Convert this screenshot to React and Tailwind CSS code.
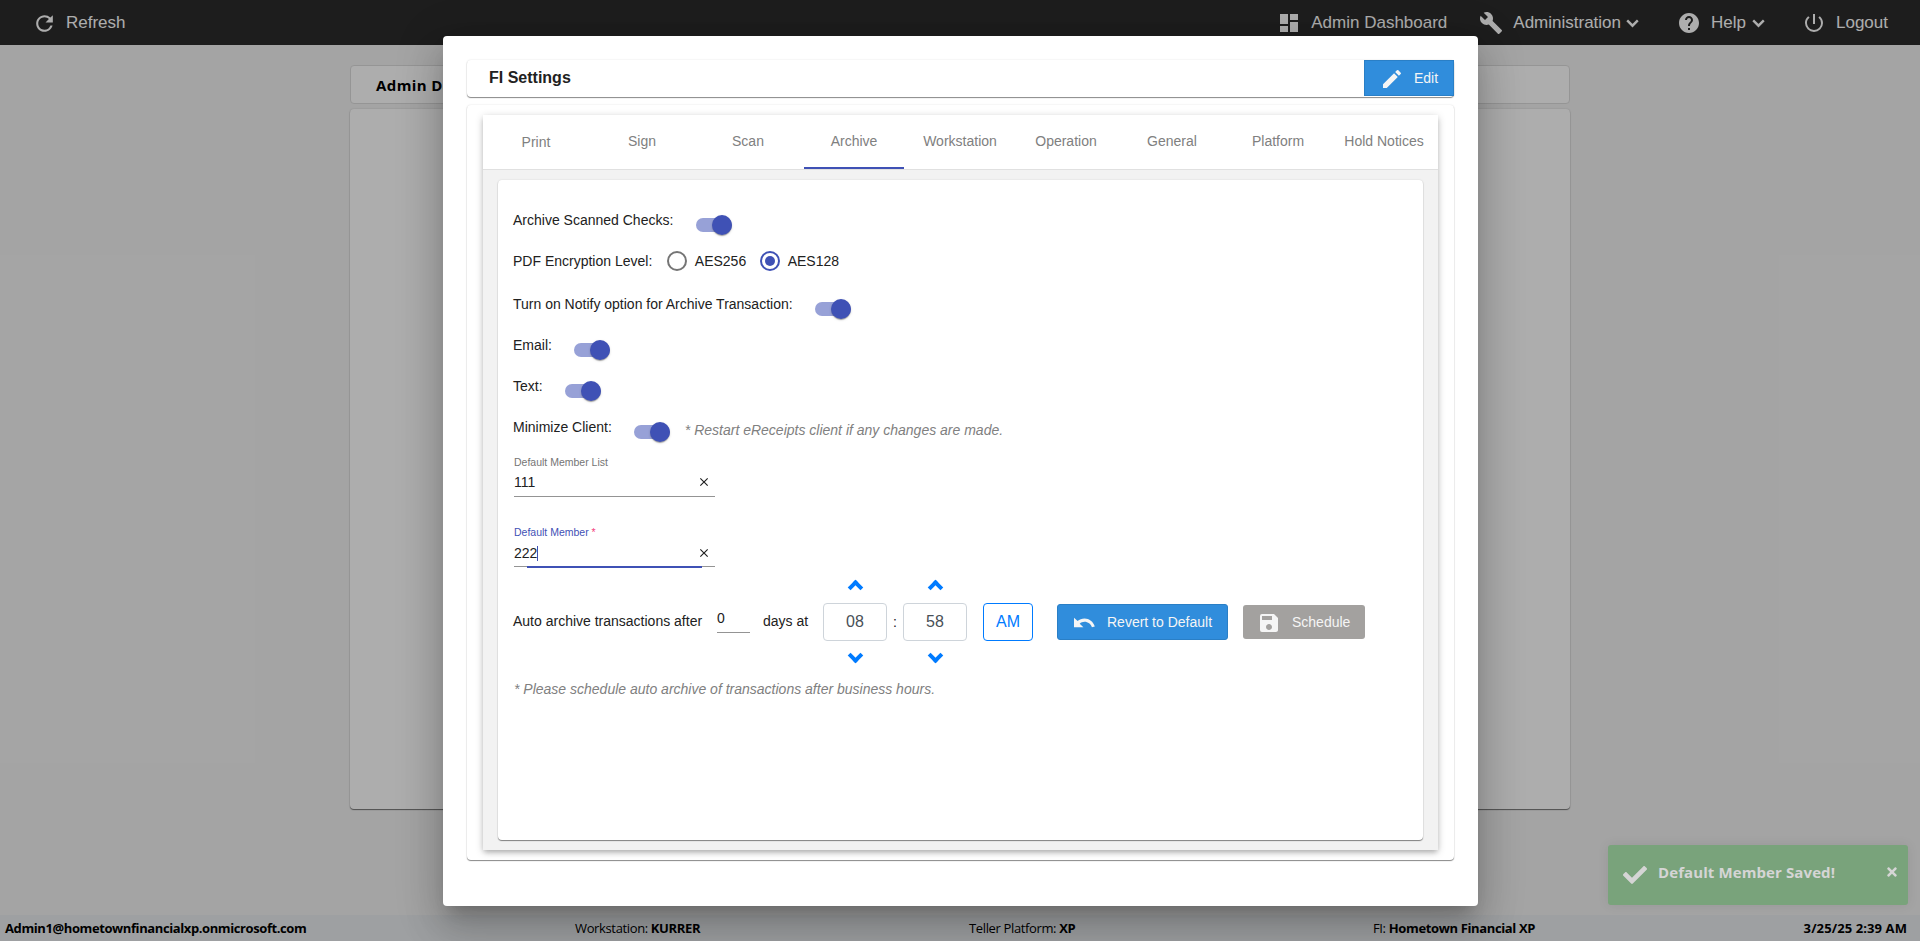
import React, { useState } from "react";
import { MdBuild, MdClose, MdDashboard, MdEdit, MdHelp, MdPowerSettingsNew, MdRefresh, MdSave } from "react-icons/md";
import { FaCheck, FaTimes } from "react-icons/fa";

const tabs = ["Print", "Sign", "Scan", "Archive", "Workstation", "Operation", "General", "Platform", "Hold Notices"];

const Chevron = () => (
  <svg className="mt-[2px] h-[9px] w-[13px]" viewBox="0 0 13 9" fill="none" stroke="currentColor" strokeWidth="2.4">
    <path d="M1.2 1.4 6.5 6.7 11.8 1.4" />
  </svg>
);

const UndoIcon = () => (
  <svg className="mt-px size-6" viewBox="0 0 24 24" fill="currentColor">
    <path d="M12.5 7.6c-2.65 0-5.05 1-6.9 2.5L2 6.8v9.4h9.4l-3.7-3.5c1.39-1.16 2.9-1.9 4.8-1.9 3.54 0 6.3 2.31 7.4 5.5l2.9-.9C21.3 10.9 17.15 7.6 12.5 7.6z" />
  </svg>
);

const TopBar = () => (
  <header className="flex h-[45px] shrink-0 items-center justify-between bg-[#2c2c2c] pl-8 pr-8 text-[17px] text-white">
    <button className="flex items-center">
      <MdRefresh className="mt-px size-[25px]" />
      <span className="ml-[9px]">Refresh</span>
    </button>
    <nav className="flex items-center">
      <a className="flex items-center">
        <MdDashboard className="mt-px size-6" />
        <span className="ml-[10px]">Admin Dashboard</span>
      </a>
      <a className="ml-8 flex items-center">
        <MdBuild className="mt-px size-6" />
        <span className="ml-[10px] mr-[5px]">Administration</span>
        <Chevron />
      </a>
      <a className="ml-[38px] flex items-center">
        <MdHelp className="mt-px size-6" />
        <span className="ml-[10px] mr-[6px]">Help</span>
        <Chevron />
      </a>
      <a className="ml-[37px] flex items-center">
        <MdPowerSettingsNew className="mt-px size-6" />
        <span className="ml-[10px]">Logout</span>
      </a>
    </nav>
  </header>
);

const StatusBar = () => (
  <footer className="flex h-[26px] shrink-0 items-center bg-[#e9ecef] pl-[5px] pt-px font-['Open_Sans',sans-serif] text-[13px] tracking-[-0.36px] text-black">
    <span className="w-[570px] font-bold tracking-[-0.4px]">Admin1@hometownfinancialxp.onmicrosoft.com</span>
    <span className="w-[394px]">Workstation: <b>KURRER</b></span>
    <span className="w-[404px]">Teller Platform: <b>XP</b></span>
    <span>FI: <b>Hometown Financial XP</b></span>
    <span className="ml-auto pr-[13px] font-bold tracking-[0.1px]">3/25/25 2:39 AM</span>
  </footer>
);

const Toggle = ({ checked = true, onChange }) => (
  <button role="switch" aria-checked={checked} onClick={onChange} className="ml-[22.5px] mt-[10px] flex h-5 w-9 items-center rounded-full">
    <span className="flex h-[14px] w-9 items-center justify-end rounded-full bg-[#3f51b5]/54">
      <span className="size-5 shrink-0 rounded-full bg-[#3f51b5] shadow-[0_2px_1px_-1px_rgba(0,0,0,.2),0_1px_1px_0_rgba(0,0,0,.14),0_1px_3px_0_rgba(0,0,0,.12)]" />
    </span>
  </button>
);

const SwitchRow = ({ label, className, children }) => {
  const [on, setOn] = useState(true);
  return (
    <div className={`flex h-5 items-center ${className || ""}`}>
      <span>{label}</span>
      <Toggle checked={on} onChange={() => setOn(!on)} />
      {children}
    </div>
  );
};

const Radio = ({ label, checked, className }) => (
  <label className={`flex items-center ${className}`}>
    <span className={`flex size-5 items-center justify-center rounded-full border-2 ${checked ? "border-[#3f51b5]" : "border-[#757575]"}`}>
      {checked && <span className="size-[10px] rounded-full bg-[#3f51b5]" />}
    </span>
    <span className="ml-[7.5px]">{label}</span>
  </label>
);

const Field = ({ label, value, required, focused, className }) => (
  <div className={`relative ml-px h-[41px] w-[201px] border-b border-[#949494] ${className}`}>
    <div className={`h-3 text-[10.5px] leading-[12px] ${focused ? "text-[#3f51b5]" : "text-[#757575]"}`}>
      {label}
      {required && <span className="text-[#f44380]"> *</span>}
    </div>
    <div className={`flex h-5 items-center ${focused ? "mt-[5px]" : "mt-1"}`}>
      <span className={focused ? "pb-px" : ""}>{value}</span>
      {focused && <span className="h-[15px] w-px bg-[#3f51b5]" />}
      <MdClose className="ml-auto mr-1 size-[14px]" />
    </div>
    {focused && <span className="absolute -bottom-[2px] left-[13px] h-[2px] w-[175px] bg-[#3f51b5]" />}
  </div>
);

const TimeUnit = ({ value }) => (
  <div className="flex h-[92px] w-16 flex-col items-center justify-between">
    <button className="flex h-[22px] items-center">
      <span className="size-[11px] -rotate-45 border-r-[4.5px] border-t-[4.5px] border-[#007bff]" />
    </button>
    <div className="flex h-[38px] w-16 items-center justify-center rounded border border-[#ced4da] text-base text-[#495057]">{value}</div>
    <button className="flex h-[22px] items-center pb-[3px]">
      <span className="size-[11px] rotate-[135deg] border-r-[4.5px] border-t-[4.5px] border-[#007bff]" />
    </button>
  </div>
);

const ArchiveForm = () => (
  <div className="mx-[15px] mt-[10px] h-[660px] rounded bg-white pl-[15px] pt-[30px] shadow-[0_1px_1px_0_rgba(0,0,0,.45),0_0_2px_0_rgba(0,0,0,.12)]">
    <SwitchRow label="Archive Scanned Checks:" />
    <div className="mt-[21px] flex h-5 items-center">
      <span>PDF Encryption Level:</span>
      <Radio label="AES256" className="ml-[15px]" />
      <Radio label="AES128" checked className="ml-[14px]" />
    </div>
    <SwitchRow label="Turn on Notify option for Archive Transaction:" className="mt-[23px]" />
    <SwitchRow label="Email:" className="mt-[21px]" />
    <SwitchRow label="Text:" className="mt-[21px]" />
    <SwitchRow label="Minimize Client:" className="mt-[21px]">
      <span className="ml-[14.5px] mt-[6px] italic text-[#808080]">* Restart eReceipts client if any changes are made.</span>
    </SwitchRow>
    <Field label="Default Member List" value="111" className="mt-[19px]" />
    <Field label="Default Member" value="222" required focused className="mt-[29px]" />
    <div className="mt-[9px] flex h-[92px] items-center">
      <span className="w-[204px] pb-[2px]">Auto archive transactions after</span>
      <span className="-mt-[5px] h-[27px] w-[33px] border-b border-[#949494] pt-[2px] leading-[20px]">0</span>
      <span className="ml-[13px] w-[60px] pb-[2px]">days at</span>
      <TimeUnit value="08" />
      <span className="w-4 text-center">:</span>
      <TimeUnit value="58" />
      <button className="ml-4 h-[38px] w-[50px] rounded border border-[#007bff] text-base text-[#007bff]">AM</button>
      <button className="ml-6 flex h-9 w-[171px] items-center rounded-[3px] border border-[#2a7fc6] bg-[#308ddc] pl-[14px] text-[#f5f5f5]">
        <UndoIcon />
        <span className="ml-[11px]">Revert to Default</span>
      </button>
      <button className="ml-[15px] flex h-[34px] w-[122px] items-center rounded-[3px] bg-[#a3a19f] pl-[14px] text-[#f5f5f5]">
        <MdSave className="mt-px size-6" />
        <span className="ml-[11px]">Schedule</span>
      </button>
    </div>
    <p className="ml-px mt-[11px] leading-[20px] italic text-[#808080]">* Please schedule auto archive of transactions after business hours.</p>
  </div>
);

const SettingsDialog = () => {
  const [active, setActive] = useState("Archive");
  return (
    <div className="absolute left-[443px] top-9 h-[870px] w-[1035px] rounded bg-white p-6 text-sm text-[#212121] shadow-[0_11px_15px_-7px_rgba(0,0,0,.2),0_24px_38px_3px_rgba(0,0,0,.14),0_9px_46px_8px_rgba(0,0,0,.12)]">
      <div className="flex h-[37px] items-start rounded pl-[22px] shadow-[0_1px_1px_0_rgba(0,0,0,.45),0_0_2px_0_rgba(0,0,0,.12)]">
        <h2 className="text-base font-bold leading-[35px]">FI Settings</h2>
        <button className="ml-auto flex h-9 w-[90px] items-center border border-[#2a7fc6] bg-[#308ddc] pl-[15px] text-[#f5f5f5]">
          <MdEdit className="mt-[2px] size-6" />
          <span className="ml-[10px]">Edit</span>
        </button>
      </div>
      <div className="mt-2 h-[755px] rounded px-4 pt-[10px] shadow-[0_1px_1px_0_rgba(0,0,0,.45),0_0_2px_0_rgba(0,0,0,.12)]">
        <div className="h-[735px] bg-[#f2f2f2] shadow-[0_3px_5px_-1px_rgba(0,0,0,.2),0_2px_8px_0_rgba(0,0,0,.2)]">
          <div className="grid h-[55px] grid-cols-9 border-b border-[#e0e0e0] bg-white pr-px">
            {tabs.map((tab) => (
              <button
                key={tab}
                onClick={() => setActive(tab)}
                className={`mx-[3px] flex items-center justify-center whitespace-nowrap border-b-2 text-[#808080] ${tab === "Print" ? "pt-[2px]" : ""} ${tab === active ? "border-[#3f51b5]" : "border-transparent"}`}>
                {tab}
              </button>
            ))}
          </div>
          <ArchiveForm />
        </div>
      </div>
    </div>
  );
};

const Toast = () => (
  <div className="absolute left-[1608px] top-[845px] flex h-[60px] w-[300px] items-start rounded-[3px] bg-[#79a37b] pl-[15px] text-[#d5d5d5] shadow-[0_0_12px_rgba(0,0,0,.08)]">
    <FaCheck className="mt-[18px] size-6" />
    <span className="ml-[11px] mt-[16px] font-['Open_Sans',sans-serif] text-[15px] font-bold leading-[22px] tracking-[0.1px]">Default Member Saved!</span>
    <FaTimes className="ml-auto mr-[9px] mt-[20px] size-[14px]" />
  </div>
);

const App = () => {
  return (
    <div className="relative flex h-[941px] w-[1920px] flex-col overflow-hidden bg-[#f2f2f2] font-['Liberation_Sans',Arial,sans-serif]">
      <TopBar />
      <main className="flex-1 pl-[350px] pt-5">
        <div className="flex h-[39px] w-[1220px] items-center rounded border border-[#dcdcdc] bg-white pl-[25px] pt-px font-['Open_Sans',sans-serif] text-[15px] font-bold tracking-[0.4px] text-black">
          <span className="whitespace-nowrap">Admin Da</span>
        </div>
        <div className="mt-[5px] h-[700px] w-[1220px] rounded bg-white shadow-[0_1px_1px_0_rgba(0,0,0,.5),0_0_2px_0_rgba(0,0,0,.15)]" />
      </main>
      <StatusBar />
      {/* Backdrop */}
      <div className="absolute inset-0 bg-black/32" />
      <SettingsDialog />
      <Toast />
    </div>
  );
};

export default App;
